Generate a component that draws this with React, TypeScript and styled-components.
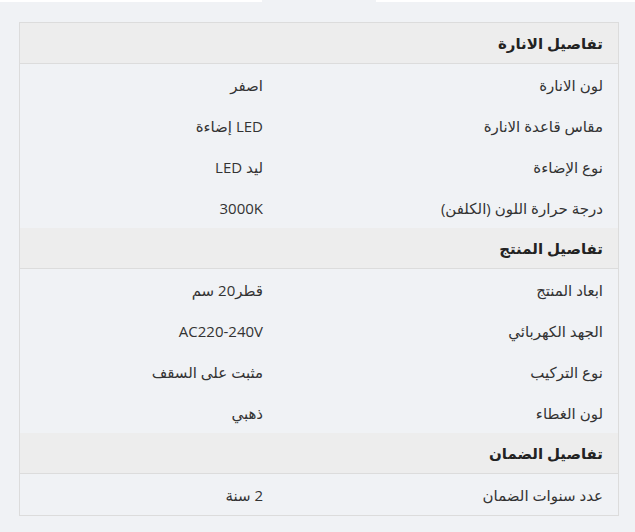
import React from "react"
import styled, { createGlobalStyle } from "styled-components"

const GlobalStyle = createGlobalStyle`
  html, body {
    margin: 0;
    padding: 0;
    background: #f0f2f5;
  }
  body {
    font-family: "Open Sans", "DejaVu Sans", sans-serif;
    color: #333;
  }
`

type Row = { label: string; value: string }
type Section = { title: string; rows: Row[] }

const sections: Section[] = [
  {
    title: "تفاصيل الانارة",
    rows: [
      { label: "لون الانارة", value: "اصفر" },
      { label: "مقاس قاعدة الانارة", value: "LED إضاءة" },
      { label: "نوع الإضاءة", value: "ليد LED" },
      { label: "درجة حرارة اللون (الكلفن)", value: "3000K" },
    ],
  },
  {
    title: "تفاصيل المنتج",
    rows: [
      { label: "ابعاد المنتج", value: "قطر20 سم" },
      { label: "الجهد الكهربائي", value: "AC220-240V" },
      { label: "نوع التركيب", value: "مثبت على السقف" },
      { label: "لون الغطاء", value: "ذهبي" },
    ],
  },
  {
    title: "تفاصيل الضمان",
    rows: [{ label: "عدد سنوات الضمان", value: "2 سنة" }],
  },
]

const Page = styled.div`
  width: 635px;
  min-height: 532px;
`

const TabStrip = styled.div`
  display: flex;
  height: 2px;
`

const TabEdge = styled.div<{ $w?: number }>`
  background: #fff;
  height: 2px;
  ${({ $w }) => ($w ? `width: ${$w}px;` : "flex: 1;")}
`

const TabGap = styled.div`
  width: 114px;
`

const Table = styled.div`
  direction: rtl;
  margin: 20px 16px 0 19px;
  border: 1px solid #dcdcdc;
  display: grid;
  grid-template-columns: 340px 1fr;
`

const Head = styled.div`
  grid-column: 1 / -1;
  height: 40px;
  display: flex;
  align-items: center;
  padding: 0 15px;
  background: #ededed;
  border-bottom: 1px solid #dcdcdc;
  font-size: 15px;
  font-weight: 700;
  color: #222;
`

const Cell = styled.div`
  height: 41px;
  display: flex;
  align-items: center;
  padding: 0 15px;
  font-size: 15px;
  color: #333;
`

export default function App() {
  return (
    <Page>
      <GlobalStyle />
      <TabStrip>
        <TabEdge $w={262} />
        <TabGap />
        <TabEdge />
      </TabStrip>
      <Table>
        {sections.map((s) => (
          <React.Fragment key={s.title}>
            <Head>{s.title}</Head>
            {s.rows.map((r) => (
              <React.Fragment key={r.label}>
                <Cell>{r.label}</Cell>
                <Cell>{r.value}</Cell>
              </React.Fragment>
            ))}
          </React.Fragment>
        ))}
      </Table>
    </Page>
  )
}
